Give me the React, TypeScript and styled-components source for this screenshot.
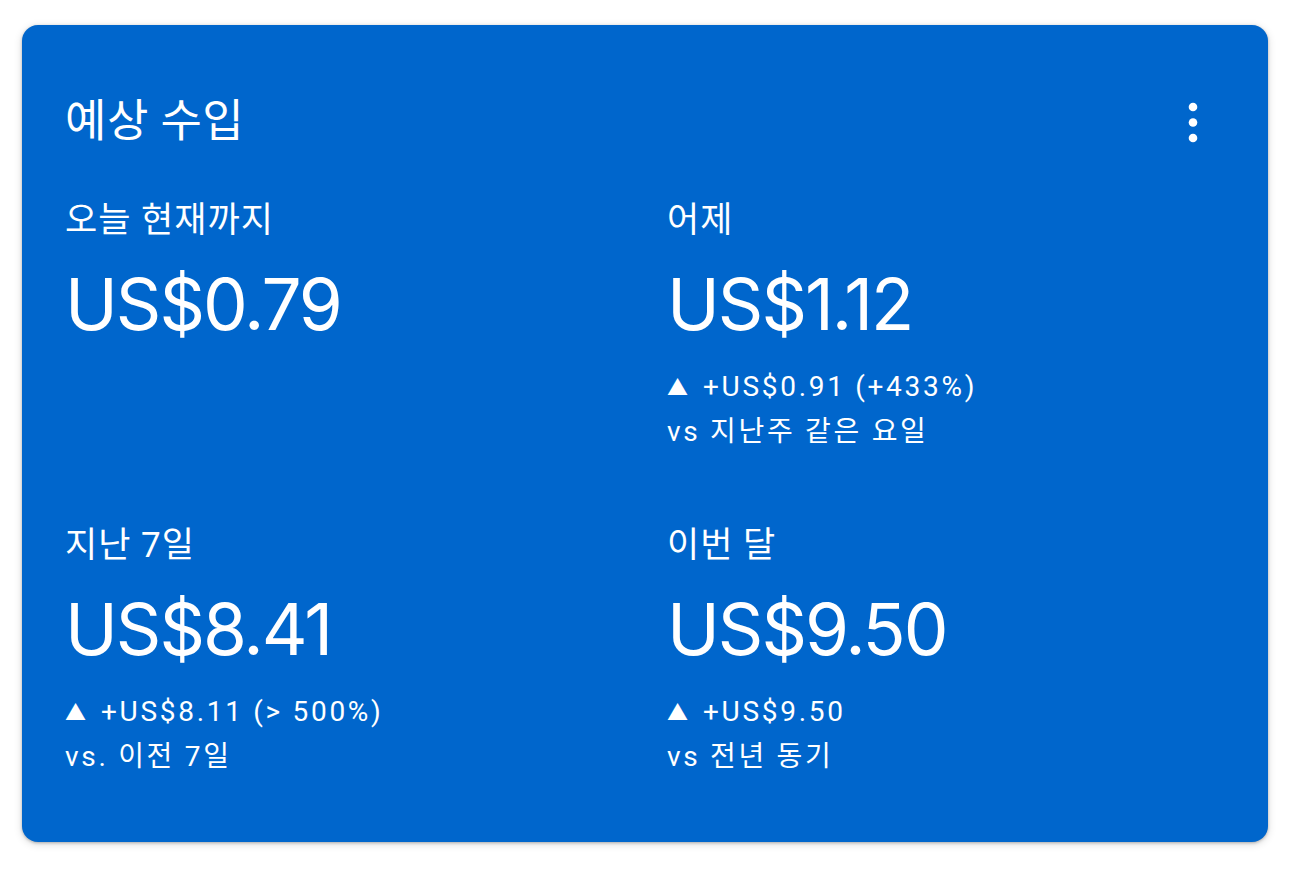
import React from 'react';
import styled, { createGlobalStyle } from 'styled-components';

const GlobalStyle = createGlobalStyle`
  html, body {
    margin: 0;
    padding: 0;
    background: #ffffff;
  }
  body {
    font-family: Roboto, "Noto Sans CJK KR", "Noto Sans", sans-serif;
  }
`;

interface Metric {
  id: string;
  label: string;
  value: string;
  change?: string;
  compare?: string;
}

const metrics: Metric[] = [
  { id: 'today', label: '오늘 현재까지', value: 'US$0.79' },
  {
    id: 'yesterday',
    label: '어제',
    value: 'US$1.12',
    change: '+US$0.91 (+433%)',
    compare: 'vs 지난주 같은 요일',
  },
  {
    id: 'week',
    label: '지난 7일',
    value: 'US$8.41',
    change: '+US$8.11 (> 500%)',
    compare: 'vs. 이전 7일',
  },
  {
    id: 'month',
    label: '이번 달',
    value: 'US$9.50',
    change: '+US$9.50',
    compare: 'vs 전년 동기',
  },
];

const Page = styled.div`
  padding: 25px 22px;
`;

const Card = styled.section`
  box-sizing: border-box;
  width: 1246px;
  height: 817px;
  background: #0066cc;
  color: #ffffff;
  border-radius: 16px;
  box-shadow: 0 1px 3px rgba(0, 0, 0, 0.25), 0 2px 8px rgba(0, 0, 0, 0.15);
  padding: 73px 43px 0 43px;
  display: flex;
  flex-direction: column;
`;

const Header = styled.div`
  display: flex;
  align-items: flex-start;
  justify-content: space-between;
  height: 48px;
`;

const Title = styled.h2`
  margin: 0;
  font-size: 45px;
  line-height: 48px;
  font-weight: 400;
  letter-spacing: 0.5px;
`;

const MenuButton = styled.button`
  border: none;
  background: transparent;
  padding: 0;
  margin-right: 20px;
  width: 24px;
  height: 48px;
  color: #ffffff;
  cursor: pointer;
  display: flex;
`;

const Grid = styled.div`
  display: grid;
  grid-template-columns: 602px 1fr;
  row-gap: 72px;
  margin-top: 55px;
`;

const Cell = styled.div`
  display: flex;
  flex-direction: column;
`;

const Label = styled.div`
  font-size: 35px;
  line-height: 40px;
  letter-spacing: 1px;
`;

const Value = styled.div`
  font-family: Inter, Roboto, sans-serif;
  font-size: 71px;
  line-height: 88px;
  margin-top: 19px;
  letter-spacing: -2px;
`;

const Delta = styled.div`
  margin-top: 17px;
  font-size: 28px;
  line-height: 44px;
  letter-spacing: 2.7px;
`;

const Line = styled.div`
  white-space: nowrap;
`;

const Arrow = styled.span`
  display: inline-block;
  font-size: 21px;
  letter-spacing: 0;
  margin-right: 15px;
  vertical-align: 1px;
`;

const KebabIcon = () => (
  <svg width="24" height="48" viewBox="0 0 24 48" fill="currentColor">
    <circle cx="12" cy="9" r="4.3" />
    <circle cx="12" cy="24.5" r="4.3" />
    <circle cx="12" cy="40" r="4.3" />
  </svg>
);

const App: React.FC = () => {
  return (
    <>
      <GlobalStyle />
      <Page>
        <Card>
          <Header>
            <Title>예상 수입</Title>
            <MenuButton aria-label="더보기">
              <KebabIcon />
            </MenuButton>
          </Header>
          <Grid>
            {metrics.map((m) => (
              <Cell key={m.id}>
                <Label>{m.label}</Label>
                <Value>{m.value}</Value>
                {m.change && (
                  <Delta>
                    <Line>
                      <Arrow>▲</Arrow>
                      {m.change}
                    </Line>
                    <Line>{m.compare}</Line>
                  </Delta>
                )}
              </Cell>
            ))}
          </Grid>
        </Card>
      </Page>
    </>
  );
};

export default App;
